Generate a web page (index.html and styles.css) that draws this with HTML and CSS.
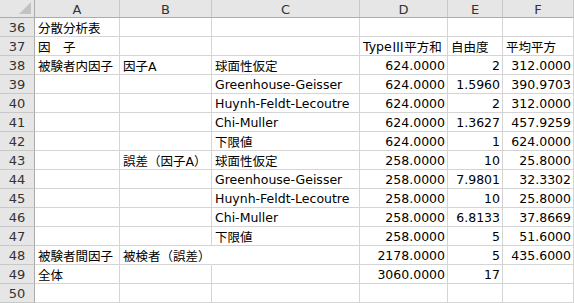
FILE: index.html
```html
<!DOCTYPE html>
<html lang="ja">
<head>
<meta charset="utf-8">
<title>分散分析表</title>
<link rel="stylesheet" href="styles.css">
</head>
<body>
<div class="sheet">
  <div class="corner"><span class="corner-mark"></span></div>
  <div class="colhead">A</div>
  <div class="colhead">B</div>
  <div class="colhead">C</div>
  <div class="colhead">D</div>
  <div class="colhead">E</div>
  <div class="colhead">F</div>

  <div class="rowhead">36</div>
  <div class="cell">分散分析表</div><div class="cell"></div><div class="cell"></div><div class="cell"></div><div class="cell"></div><div class="cell"></div>

  <div class="rowhead">37</div>
  <div class="cell">因　子</div><div class="cell"></div><div class="cell"></div><div class="cell">Type<span class="jp">Ⅲ</span>平方和</div><div class="cell">自由度</div><div class="cell">平均平方</div>

  <div class="rowhead">38</div>
  <div class="cell">被験者内因子</div><div class="cell">因子A</div><div class="cell">球面性仮定</div><div class="cell num">624.0000</div><div class="cell num">2</div><div class="cell num">312.0000</div>

  <div class="rowhead">39</div>
  <div class="cell"></div><div class="cell"></div><div class="cell">Greenhouse-Geisser</div><div class="cell num">624.0000</div><div class="cell num">1.5960</div><div class="cell num">390.9703</div>

  <div class="rowhead">40</div>
  <div class="cell"></div><div class="cell"></div><div class="cell">Huynh-Feldt-Lecoutre</div><div class="cell num">624.0000</div><div class="cell num">2</div><div class="cell num">312.0000</div>

  <div class="rowhead">41</div>
  <div class="cell"></div><div class="cell"></div><div class="cell">Chi-Muller</div><div class="cell num">624.0000</div><div class="cell num">1.3627</div><div class="cell num">457.9259</div>

  <div class="rowhead">42</div>
  <div class="cell"></div><div class="cell"></div><div class="cell">下限値</div><div class="cell num">624.0000</div><div class="cell num">1</div><div class="cell num">624.0000</div>

  <div class="rowhead">43</div>
  <div class="cell"></div><div class="cell">誤差（因子A）</div><div class="cell">球面性仮定</div><div class="cell num">258.0000</div><div class="cell num">10</div><div class="cell num">25.8000</div>

  <div class="rowhead">44</div>
  <div class="cell"></div><div class="cell"></div><div class="cell">Greenhouse-Geisser</div><div class="cell num">258.0000</div><div class="cell num">7.9801</div><div class="cell num">32.3302</div>

  <div class="rowhead">45</div>
  <div class="cell"></div><div class="cell"></div><div class="cell">Huynh-Feldt-Lecoutre</div><div class="cell num">258.0000</div><div class="cell num">10</div><div class="cell num">25.8000</div>

  <div class="rowhead">46</div>
  <div class="cell"></div><div class="cell"></div><div class="cell">Chi-Muller</div><div class="cell num">258.0000</div><div class="cell num">6.8133</div><div class="cell num">37.8669</div>

  <div class="rowhead">47</div>
  <div class="cell"></div><div class="cell"></div><div class="cell">下限値</div><div class="cell num">258.0000</div><div class="cell num">5</div><div class="cell num">51.6000</div>

  <div class="rowhead">48</div>
  <div class="cell">被験者間因子</div><div class="cell spill">被検者（誤差）</div><div class="cell"></div><div class="cell num">2178.0000</div><div class="cell num">5</div><div class="cell num">435.6000</div>

  <div class="rowhead">49</div>
  <div class="cell">全体</div><div class="cell"></div><div class="cell"></div><div class="cell num">3060.0000</div><div class="cell num">17</div><div class="cell"></div>

  <div class="rowhead">50</div>
  <div class="cell"></div><div class="cell"></div><div class="cell"></div><div class="cell"></div><div class="cell"></div><div class="cell"></div>
</div>
</body>
</html>
```

FILE: styles.css
```css
html, body {
  margin: 0;
  padding: 0;
  background: #ffffff;
}

.sheet {
  display: grid;
  grid-template-columns: 35px 85px 92px 148px 88px 55px 1fr;
  grid-template-rows: 18px repeat(15, 19px);
  width: 574px;
  height: 303px;
  overflow: hidden;
  font-family: "DejaVu Sans", "Noto Sans CJK JP", sans-serif;
  font-size: 12.5px;
  color: #000000;
}

.jp {
  font-family: "Noto Sans CJK JP", sans-serif;
}

.corner,
.colhead,
.rowhead {
  box-sizing: border-box;
  background: #e6e6e6;
  color: #333333;
  display: flex;
  align-items: center;
  justify-content: center;
  line-height: 1;
}

.corner {
  border-right: 1px solid #ababab;
  border-bottom: 1px solid #ababab;
  position: relative;
}

.corner-mark {
  position: absolute;
  right: 3px;
  bottom: 3px;
  width: 0;
  height: 0;
  border-left: 12px solid transparent;
  border-bottom: 12px solid #c2c2c2;
}

.colhead {
  border-right: 1px solid #c8c8c8;
  border-bottom: 1px solid #ababab;
  padding-top: 1px;
  font-size: 13px;
}

.rowhead {
  border-right: 1px solid #ababab;
  border-bottom: 1px solid #c8c8c8;
  font-size: 13px;
}

.cell {
  box-sizing: border-box;
  border-right: 1px solid #d4d4d4;
  border-bottom: 1px solid #d4d4d4;
  padding: 1px 2px 0 3px;
  display: flex;
  align-items: center;
  white-space: nowrap;
  overflow: visible;
  min-width: 0;
}

.num {
  justify-content: flex-end;
}

.spill {
  border-right-color: transparent;
}
```
